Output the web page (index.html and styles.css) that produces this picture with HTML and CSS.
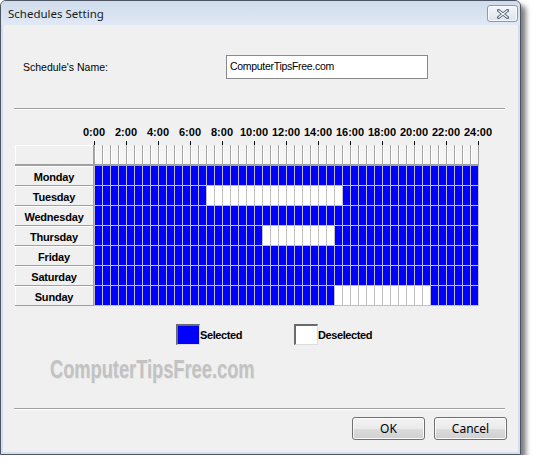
FILE: index.html
```html
<!DOCTYPE html>
<html>
<head>
<meta charset="utf-8">
<title>Schedules Setting</title>
<link rel="stylesheet" href="styles.css">
</head>
<body>
<div class="window">
  <div class="titlebar">
    <span class="title">Schedules Setting</span>
    <div class="close">
      <svg width="12" height="10" viewBox="0 0 12 10">
        <path d="M1.5 1.5 L10.5 8.5 M10.5 1.5 L1.5 8.5" stroke="#5d6878" stroke-width="3" stroke-linecap="square" fill="none"/>
        <path d="M1.5 1.5 L10.5 8.5 M10.5 1.5 L1.5 8.5" stroke="#f4f6f9" stroke-width="1.2" fill="none"/>
      </svg>
    </div>
  </div>
  <div class="client">
    <div class="name-row">
      <span class="name-label">Schedule's Name:</span>
      <div class="name-input">ComputerTipsFree.com</div>
    </div>
    <div class="sep"></div>
    <div class="schedule">
      <div class="hours">
        <span>0:00</span><span>2:00</span><span>4:00</span><span>6:00</span><span>8:00</span><span>10:00</span><span>12:00</span><span>14:00</span><span>16:00</span><span>18:00</span><span>20:00</span><span>22:00</span><span>24:00</span>
      </div>
      <div class="ticks">
        <span></span><span></span><span></span><span></span><span></span><span></span><span></span><span></span><span></span><span></span><span></span><span></span>
      </div>
      <div class="row head">
        <div class="day"></div>
        <div class="cells"></div>
      </div>
      <div class="row">
        <div class="day">Monday</div>
        <div class="cells"><span class="on" style="width:384px"></span></div>
      </div>
      <div class="row">
        <div class="day">Tuesday</div>
        <div class="cells"><span class="on" style="width:112px"></span><span class="off" style="width:136px"></span><span class="on" style="width:136px"></span></div>
      </div>
      <div class="row">
        <div class="day">Wednesday</div>
        <div class="cells"><span class="on" style="width:384px"></span></div>
      </div>
      <div class="row">
        <div class="day">Thursday</div>
        <div class="cells"><span class="on" style="width:168px"></span><span class="off" style="width:72px"></span><span class="on" style="width:144px"></span></div>
      </div>
      <div class="row">
        <div class="day">Friday</div>
        <div class="cells"><span class="on" style="width:384px"></span></div>
      </div>
      <div class="row">
        <div class="day">Saturday</div>
        <div class="cells"><span class="on" style="width:384px"></span></div>
      </div>
      <div class="row">
        <div class="day">Sunday</div>
        <div class="cells"><span class="on" style="width:240px"></span><span class="off" style="width:96px"></span><span class="on" style="width:48px"></span></div>
      </div>
    </div>
    <div class="legend">
      <div class="legend-item"><span class="swatch swatch-on"></span><span class="legend-text">Selected</span></div>
      <div class="legend-item"><span class="swatch swatch-off"></span><span class="legend-text">Deselected</span></div>
    </div>
    <div class="watermark">ComputerTipsFree.com</div>
    <div class="footer">
      <div class="sep"></div>
      <div class="buttons">
        <button class="btn">OK</button>
        <button class="btn">Cancel</button>
      </div>
    </div>
  </div>
</div>
</body>
</html>
```

FILE: styles.css
```css
* { box-sizing: border-box; }

body {
  margin: 0;
  background: #ffffff;
  font-family: "Liberation Sans", Arial, sans-serif;
  font-size: 11px;
  color: #000;
}

.window {
  width: 521px;
  height: 455px;
  border: 1px solid #4c5561;
  border-radius: 6px 6px 0 0;
  background: #d3dfee;
  box-shadow: 5px 5px 5px rgba(0, 0, 0, 0.5);
  display: flex;
  flex-direction: column;
}

.titlebar {
  height: 24px;
  flex: none;
  display: flex;
  align-items: center;
  justify-content: space-between;
  padding: 0 2px 0 7px;
  background: linear-gradient(#d0dcec, #e0e9f4);
  border-radius: 5px 5px 0 0;
}

.title {
  font-family: "Noto Sans", "Open Sans", sans-serif;
  font-size: 11.5px;
  color: #1a1a1a;
  padding-top: 1px;
}

.close {
  width: 31px;
  height: 17px;
  margin-top: 1px;
  border: 1px solid #8b9aae;
  border-radius: 3px;
  background: linear-gradient(#f4f7fb, #dce4ee);
  box-shadow: inset 0 0 0 1px rgba(255, 255, 255, 0.7);
  display: flex;
  align-items: center;
  justify-content: center;
}

.client {
  flex: 1;
  margin: 0 2px 2px 2px;
  background: #f0f0f0;
  display: flex;
  flex-direction: column;
}

.name-row {
  margin-top: 30px;
  padding-left: 20px;
  display: flex;
  align-items: center;
}

.name-label {
  width: 203px;
  font-size: 10.5px;
}

.name-input {
  width: 202px;
  height: 24px;
  border: 1px solid #8a8a8a;
  background: #fff;
  padding: 4px 0 0 3px;
  font-size: 10.5px;
  letter-spacing: -0.3px;
}

.sep {
  margin-left: 11px;
  width: 491px;
  height: 2px;
  border-top: 1px solid #a0a0a0;
  border-bottom: 1px solid #ffffff;
}

.client > .sep {
  margin-top: 29px;
}

.schedule {
  margin-top: 16px;
  padding-left: 12px;
  display: flex;
  flex-direction: column;
}

.hours {
  margin-left: 63px;
  height: 13px;
  display: flex;
}

.hours span {
  flex: none;
  width: 32px;
  display: flex;
  justify-content: center;
  white-space: nowrap;
  font-weight: bold;
  font-size: 11px;
  line-height: 13px;
}

.ticks {
  margin-top: 2px;
  margin-left: 79px;
  height: 4px;
  display: flex;
}

.ticks span {
  flex: none;
  width: 32px;
  height: 4px;
  border-left: 1px solid #000;
}

.ticks span:last-child {
  width: 33px;
  border-right: 1px solid #000;
}

.row {
  display: flex;
  height: 20px;
}

.day {
  flex: none;
  width: 79px;
  height: 20px;
  background: #f0f0f0;
  border-right: 1px solid #a0a0a0;
  border-bottom: 1px solid #a0a0a0;
  box-shadow: inset 1px 1px 0 #ffffff;
  font-weight: bold;
  font-size: 11px;
  letter-spacing: -0.2px;
  line-height: 19px;
  padding-top: 2px;
  text-align: center;
}

.cells {
  flex: none;
  width: 385px;
  height: 20px;
  display: flex;
  border-right: 1px solid #c0c0c0;
  border-bottom: 1px solid #c0c0c0;
}

.cells span {
  flex: none;
  height: 19px;
}

.on {
  background: repeating-linear-gradient(to right, #c0c0c0 0 1px, #0000ff 1px 8px);
}

.off {
  background: repeating-linear-gradient(to right, #c0c0c0 0 1px, #ffffff 1px 8px);
}

.row.head {
  height: 21px;
}

.head .day {
  height: 21px;
  border-bottom: 2px solid #a0a0a0;
}

.head .cells {
  height: 21px;
  border-right: 1px solid #a0a0a0;
  border-bottom: 2px solid #a0a0a0;
  background: repeating-linear-gradient(to right, #a8a8a8 0 1px, #ffffff 1px 2px, #f4f4f4 2px 8px);
}

.legend {
  margin-top: 18px;
  padding-left: 173px;
  display: flex;
  align-items: center;
}

.legend-item {
  width: 118px;
  display: flex;
  align-items: center;
}

.swatch {
  width: 24px;
  height: 21px;
  border-top: 2px solid #6b6b6b;
  border-left: 2px solid #6b6b6b;
  border-right: 1px solid #dcdcdc;
  border-bottom: 1px solid #dcdcdc;
}

.swatch-on { background: #0000ff; }
.swatch-off { background: #ffffff; }

.legend-text {
  font-weight: bold;
  font-size: 11px;
  letter-spacing: -0.4px;
  padding-top: 1px;
}

.watermark {
  margin-top: 12px;
  margin-left: 47px;
  font-family: "Liberation Sans", Arial, sans-serif;
  font-weight: bold;
  font-size: 25px;
  line-height: 25px;
  color: #c2c2c2;
  text-shadow: 1px 1px 0 #e4e4e4;
  white-space: nowrap;
  transform: scaleX(0.73);
  transform-origin: left center;
}

.footer {
  margin-top: auto;
  padding-bottom: 12px;
}

.buttons {
  margin-top: 7px;
  padding-right: 11px;
  display: flex;
  justify-content: flex-end;
  gap: 9px;
}

.btn {
  width: 73px;
  height: 23px;
  border: 1px solid #707070;
  border-radius: 3px;
  background: linear-gradient(#f2f2f2 0%, #ebebeb 50%, #dddddd 50%, #cfcfcf 100%);
  box-shadow: inset 0 0 0 1px #fbfbfb;
  font-family: "Noto Sans", "Open Sans", sans-serif;
  font-size: 12px;
  color: #000;
  padding: 0;
}
```
